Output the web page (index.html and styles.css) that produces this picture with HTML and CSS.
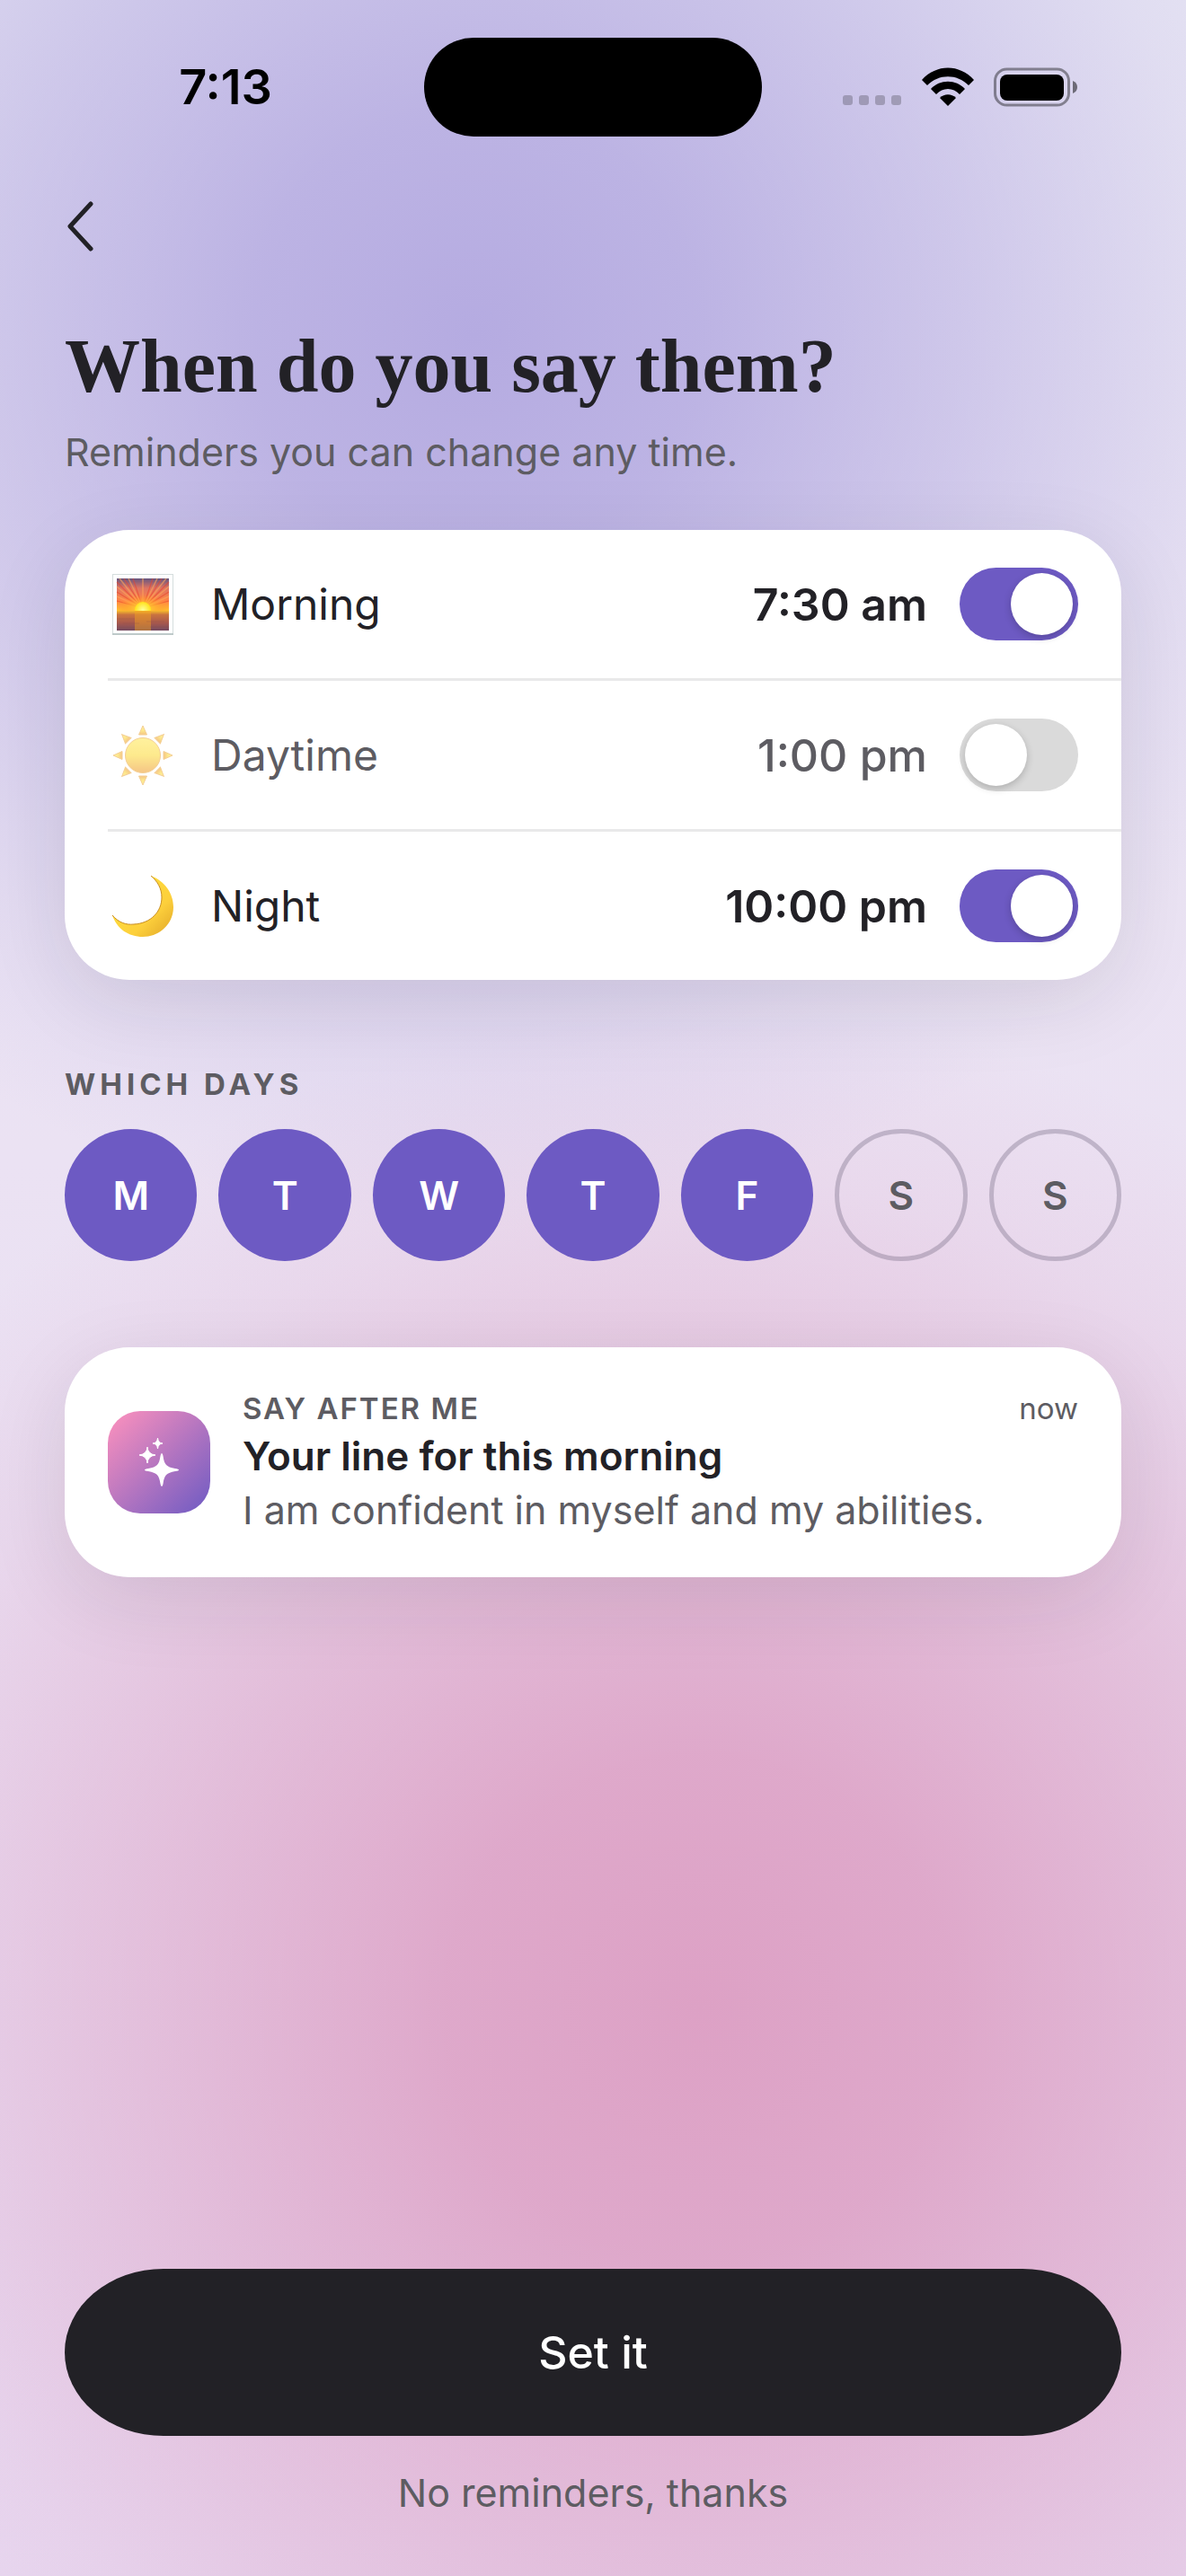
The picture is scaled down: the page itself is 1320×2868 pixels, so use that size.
FILE: index.html
```
<!DOCTYPE html>
<html lang="en">
<head>
    <meta charset="UTF-8">
    <meta name="viewport" content="width=device-width, initial-scale=1.0">
    <title>Reminders</title>
    <link rel="stylesheet" href="styles.css">
</head>
<body>
    <div id="screen">
        <header class="status">
            <span class="clock">7:13</span>
            <span class="island"></span>
            <div class="signals">
                <svg width="66" height="44" viewBox="0 0 66 44">
                    <g fill="#000" fill-opacity="0.22">
                        <rect x="0" y="31" width="11" height="11" rx="3"/>
                        <rect x="18" y="31" width="11" height="11" rx="3"/>
                        <rect x="36" y="31" width="11" height="11" rx="3"/>
                        <rect x="54" y="31" width="11" height="11" rx="3"/>
                    </g>
                </svg>
                <svg width="58" height="44" viewBox="0 0 58 44">
                    <path d="M0 14C16 -4 42 -4 58 14L52 20C39 7 19 7 6 20Z"/>
                    <path d="M10 24C20 13 38 13 48 24L42 30C35 22 23 22 16 30Z"/>
                    <path d="M20 34C25 29 33 29 38 34L29 43Z"/>
                </svg>
                <svg width="94" height="44" viewBox="0 0 94 44">
                    <rect x="1.5" y="2" width="82" height="40" rx="13" fill="none" stroke="#000" stroke-opacity="0.4" stroke-width="3"/>
                    <rect x="7" y="8" width="71" height="29" rx="8"/>
                    <path d="M88 15Q93 17 93 22Q93 27 88 29Z" fill-opacity="0.5"/>
                </svg>
            </div>
        </header>

        <main>
            <button type="button" class="back" aria-label="Back">
                <svg width="36" height="60" viewBox="0 0 36 60">
                    <path d="M29 5L6 30L29 55" fill="none" stroke="#222126" stroke-width="5" stroke-linecap="round" stroke-linejoin="round"/>
                </svg>
            </button>
            <h1>When do you say them?</h1>
            <p class="sub">Reminders you can change any time.</p>

            <div class="card times">
                <label class="row">
                    <svg class="emoji" viewBox="0 0 68 68">
                        <defs>
                            <linearGradient id="sky" x1="0" y1="0" x2="0" y2="1">
                                <stop offset="0" stop-color="#66557f"/>
                                <stop offset="0.3" stop-color="#dd7463"/>
                                <stop offset="0.7" stop-color="#ff8544"/>
                                <stop offset="1" stop-color="#ffc32e"/>
                            </linearGradient>
                            <linearGradient id="sea" x1="0" y1="0" x2="0" y2="1">
                                <stop offset="0" stop-color="#f6b92c"/>
                                <stop offset="0.2" stop-color="#c9733f"/>
                                <stop offset="0.6" stop-color="#a9594c"/>
                                <stop offset="1" stop-color="#744a60"/>
                            </linearGradient>
                            <radialGradient id="rise">
                                <stop offset="0" stop-color="#ffff9a"/>
                                <stop offset="1" stop-color="#ffe11a"/>
                            </radialGradient>
                            <radialGradient id="glow">
                                <stop offset="0" stop-color="#ffe03a"/>
                                <stop offset="0.5" stop-color="#ffb030" stop-opacity="0.8"/>
                                <stop offset="1" stop-color="#ff8a30" stop-opacity="0"/>
                            </radialGradient>
                        </defs>
                        <rect x="0.5" y="0.5" width="67" height="67" fill="#fff" stroke="#d5dddd"/>
                        <rect x="0" y="66" width="68" height="2" fill="#becaca"/>
                        <rect x="5" y="5" width="58" height="36" fill="url(#sky)"/>
                        <path d="M34 38L5 30M34 38L5 20M34 38L5 9M34 38L13 5M34 38L23 5M34 38L45 5M34 38L55 5M34 38L63 9M34 38L63 20M34 38L63 30" stroke="#e8452f" stroke-width="1.2" stroke-opacity="0.6"/>
                        <path d="M34 38L5 25M34 38L5 14M34 38L8 5M34 38L18 5M34 38L34 5M34 38L50 5M34 38L60 5M34 38L63 14M34 38L63 25" stroke="#ffa65a" stroke-width="1.5" stroke-opacity="0.6"/>
                        <ellipse cx="34" cy="39" rx="29" ry="16" fill="url(#glow)"/>
                        <circle cx="34" cy="40" r="9" fill="url(#rise)"/>
                        <rect x="5" y="41" width="58" height="22" fill="url(#sea)"/>
                        <rect x="25" y="41" width="18" height="22" fill="#f3a31f" fill-opacity="0.45"/>
                        <path d="M5 50H25M12 55H30M38 53H58M42 59H63M8 60H24" stroke="#8c4f4c" stroke-opacity="0.3"/>
                    </svg>
                    <span class="name">Morning</span>
                    <time>7:30 am</time>
                    <input type="checkbox" role="switch" checked>
                </label>
                <label class="row off">
                    <svg class="emoji" viewBox="0 0 68 68">
                        <defs>
                            <linearGradient id="sun" x1="0" y1="0" x2="0" y2="1">
                                <stop offset="0" stop-color="#ffe95e"/>
                                <stop offset="0.5" stop-color="#fddc42"/>
                                <stop offset="1" stop-color="#ef9f35"/>
                            </linearGradient>
                        </defs>
                        <g fill="url(#sun)" stroke="#eeb04f" stroke-width="1">
                            <circle cx="34" cy="34" r="19.5"/>
                            <path d="M34 1L38.500 11H29.500Z"/>
                            <path d="M34 1L38.500 11H29.500Z" transform="rotate(45 34 34)"/>
                            <path d="M34 1L38.500 11H29.500Z" transform="rotate(90 34 34)"/>
                            <path d="M34 1L38.500 11H29.500Z" transform="rotate(135 34 34)"/>
                            <path d="M34 1L38.500 11H29.500Z" transform="rotate(180 34 34)"/>
                            <path d="M34 1L38.500 11H29.500Z" transform="rotate(225 34 34)"/>
                            <path d="M34 1L38.500 11H29.500Z" transform="rotate(270 34 34)"/>
                            <path d="M34 1L38.500 11H29.500Z" transform="rotate(315 34 34)"/>
                        </g>
                    </svg>
                    <span class="name">Daytime</span>
                    <time>1:00 pm</time>
                    <input type="checkbox" role="switch">
                </label>
                <label class="row">
                    <svg class="emoji" viewBox="0 0 68 68">
                        <defs>
                            <linearGradient id="moon" x1="0" y1="0" x2="1" y2="1">
                                <stop offset="0" stop-color="#ffe23a"/>
                                <stop offset="0.65" stop-color="#fdd03c"/>
                                <stop offset="1" stop-color="#dfa528"/>
                            </linearGradient>
                        </defs>
                        <path d="M43 0C58 6 68 19 68 35C68 53 53 68 34 68C18 68 5 59 0 44C7 52 15 55 24 54C43 53 55 40 55 24C55 14 50 6 43 0Z" fill="url(#moon)"/>
                        <path d="M43 0C50 6 55 14 55 24C55 40 43 53 24 54C15 55 7 52 0 44" fill="none" stroke="#c98d22" stroke-width="1"/>
                    </svg>
                    <span class="name">Night</span>
                    <time>10:00 pm</time>
                    <input type="checkbox" role="switch" checked>
                </label>
            </div>

            <h2>WHICH DAYS</h2>
            <div class="days">
                <button type="button" class="on">M</button>
                <button type="button" class="on">T</button>
                <button type="button" class="on">W</button>
                <button type="button" class="on">T</button>
                <button type="button" class="on">F</button>
                <button type="button">S</button>
                <button type="button">S</button>
            </div>

            <div class="card notice">
                <div class="app">
                    <svg width="44" height="54" viewBox="0 0 44 54">
                        <g fill="#fff">
                            <path d="M25 17Q26 17 26.500 20C28 30 30 32 40 34Q44 34.500 44 35.500Q44 36.500 40 37C30 39 28 41 26.500 51Q26 54 25 54Q24 54 23.500 51C22 41 20 39 10 37Q6 36.500 6 35.500Q6 34.500 10 34C20 32 22 30 23.500 20Q24 17 25 17Z"/>
                            <path d="M9 10Q9.500 18 18 19Q9.500 20 9 28Q8.500 20 0 19Q8.500 18 9 10Z" stroke="#fff"/>
                            <path d="M20.500 0Q21 5.500 26 6Q21 6.500 20.500 12Q20 6.500 15 6Q20 5.500 20.500 0Z" stroke="#fff"/>
                        </g>
                    </svg>
                </div>
                <div class="msg">
                    <div class="top">
                        <span class="from">SAY AFTER ME</span>
                        <span class="when">now</span>
                    </div>
                    <h3>Your line for this morning</h3>
                    <p>I am confident in myself and my abilities.</p>
                </div>
            </div>
        </main>

        <footer>
            <button type="button" class="set">Set it</button>
            <a href="#">No reminders, thanks</a>
        </footer>
    </div>
</body>
</html>
```
FILE: styles.css
```
*{
    box-sizing: border-box;
    margin: 0;
    padding: 0;
}
body{
    font-family: Inter, "Liberation Sans", sans-serif;
    font-size: 43px;
    line-height: 54px;
    color: #222126;
}
button{
    font: inherit;
    border: none;
    background: none;
    cursor: pointer;
}
svg{
    display: block;
}
#screen{
    min-height: 100vh;
    display: flex;
    flex-direction: column;
    background:
        radial-gradient(circle 1000px at 40% 13%, #b5abe1 0%, rgba(181,171,225,0.86) 25%, rgba(181,171,225,0.5) 55%, rgba(181,171,225,0.15) 82%, rgba(181,171,225,0) 100%),
        radial-gradient(circle 1120px at 59% 78%, #dda1c5 0%, rgba(221,161,197,0.88) 25%, rgba(221,161,197,0.5) 55%, rgba(221,161,197,0.15) 82%, rgba(221,161,197,0) 100%),
        linear-gradient(#e8e6f4 0%, #ebe2f3 45%, #e8daf2 100%);
}

/* status bar */
.status{
    display: grid;
    grid-template-columns: 1fr 376px 1fr;
    align-items: center;
    padding: 42px 30px 0;
}
.clock{
    text-align: center;
    font-size: 54px;
    font-weight: 600;
    color: #000;
}
.island{
    height: 110px;
    border-radius: 55px;
    background: #000;
}
.signals{
    display: flex;
    justify-content: center;
    gap: 22px;
}

main{
    padding: 70px 72px 0;
}
.back{
    display: block;
}
h1{
    margin-top: 76px;
    font-family: "Liberation Serif", serif;
    font-size: 84px;
    line-height: 100px;
    font-weight: 700;
}
.sub{
    margin-top: 18px;
    color: #5d5c62;
}

.card{
    background: #fff;
    border-radius: 72px;
    box-shadow: 0 24px 90px rgba(34,33,38,0.1);
}
.times{
    margin-top: 60px;
    padding-left: 48px;
}
.row{
    display: flex;
    align-items: center;
    height: 165px;
    padding-right: 48px;
    font-size: 50px;
}
.row + .row{
    border-top: 3px solid #e9e9ea;
    height: 168px;
}
.emoji{
    width: 68px;
    height: 68px;
    margin: 0 42px 0 5px;
}
.name{
    flex: 1;
    font-size: 48px;
}
.row time{
    font-weight: 600;
    margin-right: 36px;
}
.off{
    color: #5d5c62;
}
.off time{
    font-weight: 500;
}
.off .emoji{
    opacity: 0.6;
}
input{
    appearance: none;
    display: flex;
    width: 132px;
    height: 81px;
    padding: 6px;
    border-radius: 41px;
    background: #dadada;
    cursor: pointer;
}
input::before{
    content: "";
    width: 69px;
    height: 69px;
    border-radius: 50%;
    background: #fff;
    box-shadow: 0 3px 9px rgba(0,0,0,0.2);
}
input:checked{
    background: #6d5ac3;
    justify-content: flex-end;
}

h2{
    margin-top: 96px;
    font-size: 33px;
    line-height: 40px;
    font-weight: 700;
    letter-spacing: 5px;
    color: #5d5c62;
}
.days{
    display: grid;
    grid-template-columns: repeat(7, 1fr);
    gap: 24px;
    margin-top: 30px;
}
.days button{
    aspect-ratio: 1;
    border: 5px solid rgba(93,82,110,0.3);
    border-radius: 50%;
    font-size: 44px;
    font-weight: 600;
    color: #5d5c62;
}
.days .on{
    border: none;
    background: #6d5ac3;
    color: #fff;
}

.notice{
    display: flex;
    align-items: center;
    gap: 36px;
    margin-top: 96px;
    padding: 48px;
}
.app{
    display: flex;
    align-items: center;
    justify-content: center;
    width: 114px;
    height: 114px;
    border-radius: 36px;
    background: linear-gradient(135deg, #ff92bd, #6d5ac3);
}
.msg{
    flex: 1;
    display: flex;
    flex-direction: column;
    gap: 6px;
    color: #5d5c62;
}
.top{
    display: flex;
    justify-content: space-between;
    font-size: 33px;
    line-height: 40px;
}
.from{
    font-weight: 600;
    letter-spacing: 2px;
}
h3{
    font-size: 44px;
    font-weight: 600;
    color: #222126;
}

footer{
    margin-top: auto;
    padding: 96px 72px 66px;
    text-align: center;
}
.set{
    display: block;
    width: 100%;
    height: 186px;
    margin-bottom: 36px;
    border-radius: 110px / 93px;
    background: #222126;
    color: #fff;
    font-size: 50px;
    font-weight: 500;
}
footer a{
    display: block;
    color: #5d5c62;
    text-decoration: none;
}
```
